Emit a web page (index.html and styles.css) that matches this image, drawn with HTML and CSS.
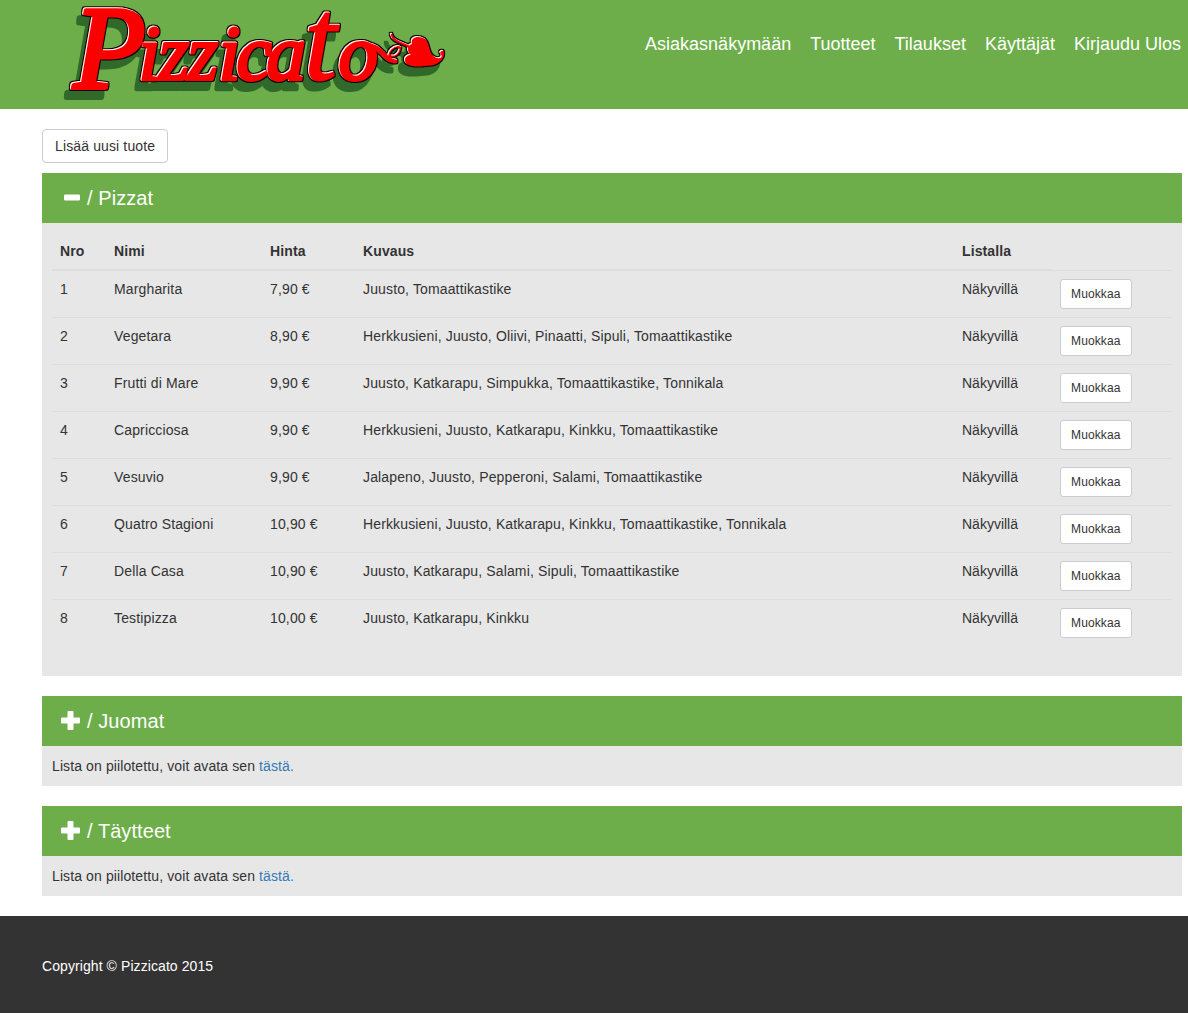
FILE: index.html
```html
<!DOCTYPE html>
<html lang="fi">
<head>
<meta charset="utf-8">
<title>Pizzicato</title>
<link rel="stylesheet" href="styles.css">
</head>
<body>
<header class="header">
  <svg class="logo" width="400" height="109" viewBox="56 0 400 109" role="img" aria-label="Pizzicato">
    <defs>
      <filter id="emboss" filterUnits="userSpaceOnUse" x="56" y="0" width="400" height="109" color-interpolation-filters="sRGB">
        <feMorphology in="SourceAlpha" operator="dilate" radius="1.2" result="edge"/>
        <feOffset in="edge" dx="-5" dy="9" result="cast"/>
        <feFlood flood-color="#30692a"/>
        <feComposite in2="cast" operator="in" result="shadow"/>
        <feFlood flood-color="#0c0500"/>
        <feComposite in2="edge" operator="in" result="outline"/>
        <feOffset in="SourceAlpha" dx="1.4" dy="0.9" result="moved"/>
        <feFlood flood-color="#fff"/>
        <feComposite in2="SourceAlpha" operator="in" result="white"/>
        <feComposite in="white" in2="moved" operator="out" result="shine"/>
        <feMerge>
          <feMergeNode in="shadow"/><feMergeNode in="outline"/><feMergeNode in="SourceGraphic"/><feMergeNode in="shine"/>
        </feMerge>
      </filter>
    </defs>
    <g filter="url(#emboss)">
      <text class="logo-text"><tspan class="logo-cap" x="73" y="88">P</tspan><tspan x="138 158 187 218 236 266" y="79">izzica</tspan><tspan class="logo-tall" x="304" y="79">t</tspan><tspan x="338" y="79">o</tspan></text>
      <path class="logo-vine" d="M369 45C376 46 379 50 384 55C388 59 391 61 395 61"/>
      <path class="logo-curl" d="M389 60C386 52 394 44 400 47C399 55 393 57 389 55M391 34C393 42 402 42 410 47"/>
      <path class="logo-leaf" d="M411 43C409 36 418 34 424 38C431 43 428 55 436 57C441 58 442 55 439 52C441 48 445 50 444 55C442 63 434 66 425 66C413 68 404 65 404 59C404 56 407 54 410 54C405 50 407 44 411 43Z"/>
    </g>
  </svg>
  <nav class="nav">
    <a href="#">Asiakasnäkymään</a><a href="#">Tuotteet</a><a href="#">Tilaukset</a><a href="#">Käyttäjät</a><a href="#">Kirjaudu Ulos</a>
  </nav>
</header>
<main class="main">
  <button class="btn">Lisää uusi tuote</button>
  <section class="panel">
    <h2 class="panel-head"><svg class="icon" viewBox="0 0 20 20"><rect x="3" y="6.500" width="16" height="6" rx="1"/></svg>/ Pizzat</h2>
    <div class="panel-body panel-open">
      <table class="table">
        <colgroup><col class="c-nro"><col class="c-name"><col class="c-price"><col class="c-desc"><col class="c-list"><col></colgroup>
        <thead><tr><th>Nro</th><th>Nimi</th><th>Hinta</th><th>Kuvaus</th><th>Listalla</th><td></td></tr></thead>
        <tbody>
          <tr><td>1</td><td>Margharita</td><td>7,90 €</td><td>Juusto, Tomaattikastike</td><td>Näkyvillä</td><td><button class="btn btn-sm">Muokkaa</button></td></tr>
          <tr><td>2</td><td>Vegetara</td><td>8,90 €</td><td>Herkkusieni, Juusto, Oliivi, Pinaatti, Sipuli, Tomaattikastike</td><td>Näkyvillä</td><td><button class="btn btn-sm">Muokkaa</button></td></tr>
          <tr><td>3</td><td>Frutti di Mare</td><td>9,90 €</td><td>Juusto, Katkarapu, Simpukka, Tomaattikastike, Tonnikala</td><td>Näkyvillä</td><td><button class="btn btn-sm">Muokkaa</button></td></tr>
          <tr><td>4</td><td>Capricciosa</td><td>9,90 €</td><td>Herkkusieni, Juusto, Katkarapu, Kinkku, Tomaattikastike</td><td>Näkyvillä</td><td><button class="btn btn-sm">Muokkaa</button></td></tr>
          <tr><td>5</td><td>Vesuvio</td><td>9,90 €</td><td>Jalapeno, Juusto, Pepperoni, Salami, Tomaattikastike</td><td>Näkyvillä</td><td><button class="btn btn-sm">Muokkaa</button></td></tr>
          <tr><td>6</td><td>Quatro Stagioni</td><td>10,90 €</td><td>Herkkusieni, Juusto, Katkarapu, Kinkku, Tomaattikastike, Tonnikala</td><td>Näkyvillä</td><td><button class="btn btn-sm">Muokkaa</button></td></tr>
          <tr><td>7</td><td>Della Casa</td><td>10,90 €</td><td>Juusto, Katkarapu, Salami, Sipuli, Tomaattikastike</td><td>Näkyvillä</td><td><button class="btn btn-sm">Muokkaa</button></td></tr>
          <tr><td>8</td><td>Testipizza</td><td>10,00 €</td><td>Juusto, Katkarapu, Kinkku</td><td>Näkyvillä</td><td><button class="btn btn-sm">Muokkaa</button></td></tr>
        </tbody>
      </table>
    </div>
  </section>
  <section class="panel">
    <h2 class="panel-head"><svg class="icon" viewBox="0 0 20 20"><path d="M7.5 0h4q1 0 1 1v5.500H18q1 0 1 1v4q0 1-1 1h-5.500V18q0 1-1 1h-4q-1 0-1-1v-5.500H1q-1 0-1-1v-4q0-1 1-1h5.500V1q0-1 1-1z"/></svg>/ Juomat</h2>
    <div class="panel-body">Lista on piilotettu, voit avata sen <a href="#">tästä.</a></div>
  </section>
  <section class="panel">
    <h2 class="panel-head"><svg class="icon" viewBox="0 0 20 20"><path d="M7.5 0h4q1 0 1 1v5.500H18q1 0 1 1v4q0 1-1 1h-5.500V18q0 1-1 1h-4q-1 0-1-1v-5.500H1q-1 0-1-1v-4q0-1 1-1h5.500V1q0-1 1-1z"/></svg>/ Täytteet</h2>
    <div class="panel-body">Lista on piilotettu, voit avata sen <a href="#">tästä.</a></div>
  </section>
</main>
<footer class="footer">Copyright © Pizzicato 2015</footer>
</body>
</html>
```
FILE: styles.css
```css
* { box-sizing: border-box; }
body {
  margin: 0;
  min-height: 1013px;
  display: flex;
  flex-direction: column;
  background: #fff;
  color: #333;
  font: 14px/20px "Liberation Sans", Arial, sans-serif;
}
.header {
  height: 109px;
  padding: 0 7px 0 56px;
  display: flex;
  justify-content: space-between;
  background: #6dae4a;
}
.logo { display: block; overflow: visible; }
.logo-text {
  font: italic 400 79px "Liberation Serif", serif;
  fill: #fb0000;
  stroke: #fb0000;
  stroke-width: 4px;
  stroke-linejoin: round;
}
.logo-cap { font-size: 118px; stroke-width: 5px; }
.logo-tall { font-size: 116px; stroke-width: 3px; }
.logo-vine { fill: none; stroke: #fb0000; stroke-width: 5; stroke-linecap: round; }
.logo-curl { fill: none; stroke: #fb0000; stroke-width: 2.5; stroke-linecap: round; }
.logo-leaf { fill: #fb0000; }
.nav { display: flex; gap: 19px; padding-top: 32px; font-size: 18px; line-height: 24px; }
.nav a { color: #fff; text-decoration: none; white-space: nowrap; }
.main { padding: 20px 6px 0 42px; }
.btn {
  display: block;
  height: 34px;
  padding: 6px 12px;
  border: 1px solid #ccc;
  border-radius: 4px;
  background: #fff;
  color: #333;
  font: inherit;
  letter-spacing: 0.13px;
}
.btn-sm { height: 30px; padding: 5px 10px; border-radius: 3px; font-size: 12px; line-height: 18px; }
.panel { margin-bottom: 20px; }
.btn + .panel { margin-top: 10px; }
.panel-head {
  height: 50px;
  margin: 0;
  padding: 0 19px;
  display: flex;
  align-items: center;
  background: #6dae4a;
  color: #fff;
  font-size: 20px;
  font-weight: 400;
  letter-spacing: 0.07px;
}
.icon { width: 20px; height: 20px; margin-right: 6px; fill: #fff; }
.panel-body { padding: 10px; background: #e7e7e7; letter-spacing: 0.11px; }
.panel-open { height: 453px; }
.panel-body a { color: #337ab7; text-decoration: none; }
.table { width: 1120px; table-layout: fixed; border-collapse: collapse; }
.table th, .table td { padding: 8px; text-align: left; vertical-align: top; border-top: 1px solid #ddd; }
.table thead th, .table thead td { border-top: 0; }
.table thead th { border-bottom: 2px solid #ddd; }
.table tbody td { letter-spacing: 0.14px; }
.table tbody td:nth-child(5) { letter-spacing: 0; }
.c-nro { width: 54px; }
.c-name { width: 156px; }
.c-price { width: 93px; }
.c-desc { width: 599px; }
.c-list { width: 98px; }
.footer { flex: 1; padding: 40px 42px; background: #333; color: #fff; letter-spacing: 0.08px; }
```
